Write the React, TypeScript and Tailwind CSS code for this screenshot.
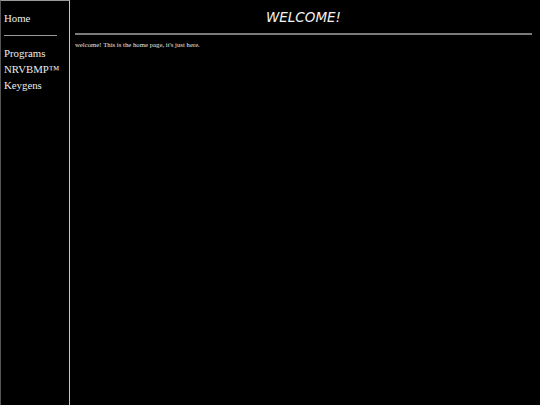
const links = ["Programs", "NRVBMP™", "Keygens"];

export default function App() {
  return (
    <div className="flex h-[405px] w-[540px] overflow-hidden bg-black text-[#eeeeee]">
      {/* sidebar */}
      <aside className="flex w-[70px] shrink-0 flex-col border-t border-r border-l border-t-[#9a9a9a] border-r-[#c4c4c4] border-l-[#555555] pt-[9px] pl-[3px] font-['Liberation_Serif',serif] text-[10.8px] leading-[16px]">
        <a className="block">Home</a>
        <hr className="mt-[9px] mb-[9px] w-[53px] border-t border-[#9a9a9a]" />
        {links.map((l) => (
          <a key={l} className="block">
            {l}
          </a>
        ))}
      </aside>

      {/* main */}
      <main className="flex-1 pt-[9px] pr-[8px] pl-[5px]">
        <h1 className="text-center font-['DejaVu_Sans',sans-serif] text-[13.5px] leading-[16px] font-normal italic text-[#f2f2f2]">
          WELCOME!
        </h1>
        <hr className="mt-[8px] border-t-2 border-[#7a7a7a]" />
        <p className="mt-[6px] font-['Liberation_Serif',serif] text-[6.75px] leading-[8px] text-[#e6e6e6]">
          welcome! This is the home page, it's just here.
        </p>
      </main>
    </div>
  );
}
